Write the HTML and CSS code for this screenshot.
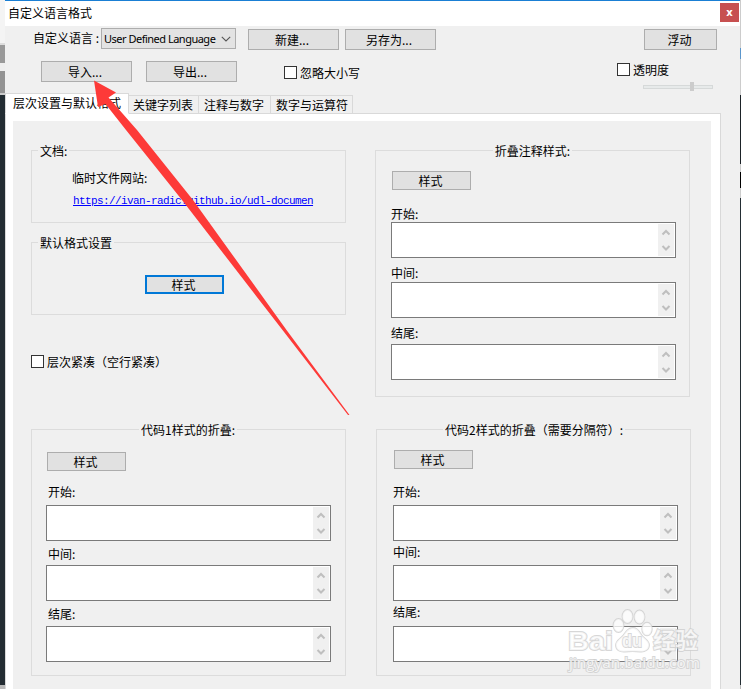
FILE: index.html
```
<!DOCTYPE html>
<html lang="zh-CN">
<head>
<meta charset="utf-8">
<title>自定义语言格式</title>
<link rel="stylesheet" href="styles.css">
</head>
<body>
<div class="desktop">
  <div class="strip-left"><i class="s1"></i><i class="s2"></i><i class="s3"></i><i class="s4"></i><i class="s5"></i></div>
  <main class="window">
    <header class="title"><span>自定义语言格式</span><button class="close">x</button></header>
    <section class="toolbar">
      <div class="row row-a">
        <label class="lang">自定义语言 :</label>
        <div class="select"><span>User Defined Language</span><svg width="10" height="6" viewBox="0 0 10 6"><path d="M.8.8 5 5 9.2.8"/></svg></div>
        <button class="btn big new">新建...</button>
        <button class="btn big save">另存为...</button>
        <button class="btn dock">浮动</button>
      </div>
      <div class="row row-b">
        <button class="btn big">导入...</button>
        <button class="btn big export">导出...</button>
        <label class="check ignore"><i></i>忽略大小写</label>
        <div class="opacity"><label class="check"><i></i>透明度</label><div class="slider"><b></b></div></div>
      </div>
    </section>
    <nav class="tabs"><span class="tab active">层次设置与默认格式</span><span class="tab t2">关键字列表</span><span class="tab t3">注释与数字</span><span class="tab t4">数字与运算符</span></nav>
    <section class="page">
      <div class="panel">
        <div class="col">
          <section class="group doc"><h2>文档:</h2><p>临时文件网站:</p><a>https://ivan-radic.github.io/udl-documen</a></section>
          <section class="group def"><h2>默认格式设置</h2><button class="btn style focus">样式</button></section>
          <label class="check compact"><i></i>层次紧凑（空行紧凑）</label>
          <section class="group fold one"><h2>代码1样式的折叠:</h2><button class="btn style">样式</button>
            <label class="l1">开始:</label><div class="area"><div class="scroll"><svg viewBox="0 0 16 32"><path d="M4.5 10.5 8 7l3.500 3.500M4.500 22 8 25.500l3.500-3.500"/></svg></div></div>
            <label class="l2">中间:</label><div class="area"><div class="scroll"><svg viewBox="0 0 16 32"><path d="M4.5 10.5 8 7l3.500 3.500M4.500 22 8 25.500l3.500-3.500"/></svg></div></div>
            <label class="l3">结尾:</label><div class="area"><div class="scroll"><svg viewBox="0 0 16 32"><path d="M4.5 10.5 8 7l3.500 3.500M4.500 22 8 25.500l3.500-3.500"/></svg></div></div>
          </section>
        </div>
        <div class="col">
          <section class="group fold comment"><h2>折叠注释样式:</h2><button class="btn style">样式</button>
            <label class="l1">开始:</label><div class="area"><div class="scroll"><svg viewBox="0 0 16 32"><path d="M4.5 10.5 8 7l3.500 3.500M4.500 22 8 25.500l3.500-3.500"/></svg></div></div>
            <label class="l2">中间:</label><div class="area"><div class="scroll"><svg viewBox="0 0 16 32"><path d="M4.5 10.5 8 7l3.500 3.500M4.500 22 8 25.500l3.500-3.500"/></svg></div></div>
            <label class="l3">结尾:</label><div class="area"><div class="scroll"><svg viewBox="0 0 16 32"><path d="M4.5 10.5 8 7l3.500 3.500M4.500 22 8 25.500l3.500-3.500"/></svg></div></div>
          </section>
          <section class="group fold two"><h2>代码2样式的折叠（需要分隔符）:</h2><button class="btn style">样式</button>
            <label class="l1">开始:</label><div class="area"><div class="scroll"><svg viewBox="0 0 16 32"><path d="M4.5 10.5 8 7l3.500 3.500M4.500 22 8 25.500l3.500-3.500"/></svg></div></div>
            <label class="l2">中间:</label><div class="area"><div class="scroll"><svg viewBox="0 0 16 32"><path d="M4.5 10.5 8 7l3.500 3.500M4.500 22 8 25.500l3.500-3.500"/></svg></div></div>
            <label class="l3">结尾:</label><div class="area"><div class="scroll"><svg viewBox="0 0 16 32"><path d="M4.5 10.5 8 7l3.500 3.500M4.500 22 8 25.500l3.500-3.500"/></svg></div></div>
          </section>
        </div>
      </div>
    </section>
  </main>
  <div class="strip-right"></div>
  <svg class="overlay" width="741" height="689" viewBox="0 0 741 689">
    <path class="arrow" d="M94 80.500 116 92.500 108.500 97.500 137 130 193 200 286.500 330 349.500 415H348L282.500 330 182 200 126 130 105.500 104 98 107Z"/>
    <g class="mark">
      <text x="568" y="650" class="bai" textLength="45" lengthAdjust="spacingAndGlyphs">Bai</text>
      <ellipse cx="618.500" cy="625.500" rx="5" ry="6.500"/><ellipse cx="627.500" cy="616.500" rx="5" ry="6.500"/><ellipse cx="639.500" cy="617" rx="5" ry="6.500"/><ellipse cx="647" cy="629" rx="4.800" ry="6.300"/>
      <path d="M633 628c-5 0-7 4-10 8-3 3-7 5-7 9 0 5 4 7 9 6.500 5-.5 10-.5 15 0 5 .5 9-2 9-6.500 0-4-4-6-7-9-3-4-4-8-9-8Z"/>
      <text x="622" y="647" class="du" textLength="20" lengthAdjust="spacingAndGlyphs">du</text>
      <text x="653" y="648" class="jy" textLength="45" lengthAdjust="spacingAndGlyphs">经验</text>
      <text x="569" y="668" class="url" textLength="131" lengthAdjust="spacingAndGlyphs">jingyan.baidu.com</text>
    </g>
  </svg>
</div>
</body>
</html>
```
FILE: styles.css
```
* { box-sizing: border-box; }
body { margin: 0; font: 12px/16px "Noto Sans CJK SC", sans-serif; color: #000; overflow: hidden; }
button { font: inherit; color: inherit; padding: 0; margin: 0; }
h2, p { margin: 0; font: inherit; }
.desktop { position: relative; display: flex; width: 741px; height: 689px; overflow: hidden; }
.strip-left { width: 5px; flex: none; display: flex; flex-direction: column; }
.strip-left i { display: block; }
.s1 { height: 43px; background: #f4f4f4; }
.s2 { height: 20px; background: #999; border-top: 2px solid #ddd; }
.s3 { height: 8px; background: #eee; }
.s4 { height: 24px; background: #939393; border-bottom: 2px solid #ccc; }
.s5 { flex: 1; background: #232d33; border-bottom: 4px solid #b9b9b9; }
.strip-right { width: 1px; flex: none; background: linear-gradient(#ccc 0 48px, #5b96cc 48px 59px, #ccc 59px 95px, #1b2227 95px 164px, #ccc 164px 172px, #000 172px 188px, #ccc 188px 198px, #232d33 198px 685px, #bbb 685px); }
.window { width: 735px; flex: none; background: #f0f0f0; border-top: 1px solid #1a7fd4; display: flex; flex-direction: column; }
.title { height: 25px; flex: none; background: #fff; display: flex; justify-content: space-between; padding: 2px 1px 0 3px; line-height: 19px; }
.close { width: 19px; height: 19px; border: 0; background: #c75050; color: #fff; font: bold 10px/16px "DejaVu Sans", sans-serif; }
.toolbar { height: 67px; flex: none; }
.row { display: flex; align-items: flex-start; }
.row-a { padding: 2px 23px 0 28px; height: 33px; }
.lang { width: 68px; line-height: 20px; white-space: pre; }
.select { width: 135px; height: 21px; border: 1px solid #adadad; background: #e3e3e3; display: flex; align-items: center; justify-content: space-between; padding: 0 4px 0 2px; font: 11px/19px "Noto Sans", sans-serif; white-space: nowrap; }
.select span { letter-spacing: -.5px; }
.select svg { fill: none; stroke: #555; stroke-width: 1.1; }
.btn { flex: none; display: flex; align-items: center; justify-content: center; height: 21px; border: 1px solid #adadad; background: #e1e1e1; line-height: 17px; white-space: nowrap; }
.row-a .btn { margin-top: 1px; }
.big { width: 91px; padding-right: 3px; }
.new { margin-left: 12px; }
.save { margin-left: 6px; }
.dock { width: 73px; margin-left: auto; padding-right: 2px; }
.row-b { padding: 2px 26px 0 36px; }
.export { margin-left: 14px; }
.check { display: flex; height: 16px; line-height: 16px; gap: 3px; align-items: center; white-space: nowrap; }
.check i { width: 13px; height: 13px; border: 1px solid #333; background: #fff; flex: none; margin-top: -1px; }
.ignore { margin: 4px 0 0 47px; }
.opacity { margin-left: auto; width: 97px; }
.opacity .check { margin-top: 1px; }
.slider { margin: 4px 0 0 26px; width: 70px; height: 9px; display: flex; align-items: center; background: linear-gradient(#e7eaea, #e7eaea) 1px 4px / 68px 2px no-repeat, linear-gradient(#d6d9d9, #d6d9d9) 0 3px / 70px 4px no-repeat; }
.slider b { width: 4px; height: 9px; margin-left: 47px; background: #ccc; }
.tabs { display: flex; align-items: flex-end; height: 21px; flex: none; margin-bottom: -1px; position: relative; }
.tab { height: 19px; border: 1px solid #d9d9d9; border-left: 0; padding-left: 5px; line-height: 18px; white-space: nowrap; }
.active { width: 124px; height: 21px; background: #fff; border-left: 1px solid #d9d9d9; border-bottom-color: #fff; padding-left: 7px; }
.t2 { width: 70px; padding-left: 4px; }
.t3 { width: 72px; }
.t4 { width: 82px; }
.page { width: 716px; height: 600px; flex: none; background: #fff; border: 1px solid #d9d9d9; padding: 7px 9px 0 7px; }
.panel { width: 698px; height: 590px; background: #f0f0f0; display: flex; gap: 29px; padding: 29px 0 0 18px; }
.col { width: 315px; display: flex; flex-direction: column; flex: none; }
.group { width: 315px; height: 73px; border: 1px solid #dcdcdc; flex: none; display: flex; flex-direction: column; }
.group h2 { align-self: flex-start; margin: -8px 0 0 6px; padding: 0 2px; background: #f0f0f0; height: 16px; white-space: nowrap; }
.doc p { margin: 11px 0 0 40px; height: 16px; }
.doc a { margin: 8px 0 0 41px; font: 11px/14px "Liberation Mono", monospace; letter-spacing: -.6px; color: #00f; text-decoration: underline; text-underline-offset: 1px; white-space: nowrap; }
.def { margin-top: 19px; }
.style { width: 79px; height: 19px; padding-right: 2px; }
.focus { border: 2px solid #0078d7; margin: 24px 0 0 113px; }
.compact { margin-top: 39px; }
.fold { height: 247px; padding-left: 15px; }
.fold h2 { align-self: center; margin-left: -15px; }
.fold .style { margin: 12px 0 0 1px; }
.fold label { height: 16px; }
.area { width: 285px; height: 36px; flex: none; border: 1px solid #7a7a7a; background: #fff; padding: 1px; display: flex; justify-content: flex-end; }
.scroll { width: 16px; height: 32px; background: #f0f0f0; }
.scroll svg { display: block; width: 16px; height: 32px; fill: none; stroke: #bfbfbf; stroke-width: 2; }
.one { margin-top: 59px; padding-left: 14px; }
.one .style { margin-top: 14px; }
.one label { padding-left: 2px; }
.one .l1 { margin: 13px 0 5px; }
.one .l2 { margin: 5px 0 3px; }
.one .l3 { margin: 5px 0 4px; }
.comment .l1 { margin: 16px 0 0; }
.comment .l2 { margin: 7px 0 1px; }
.comment .l3 { margin: 7px 0 3px; }
.two { margin: 32px 0 0 1px; padding-left: 16px; }
.two .style { margin-top: 12px; margin-left: 1px; }
.two .l1 { margin: 15px 0 5px; }
.two .l2 { margin: 3px 0 5px; }
.two .l3 { margin: 3px 0 6px; }
.overlay { position: absolute; left: 0; top: 0; pointer-events: none; }
.arrow { fill: #fd3a38; }
.mark { fill: #fff; fill-opacity: .75; stroke: #cdcdcd; stroke-width: 1.8; stroke-opacity: .8; paint-order: stroke; font-family: "Open Sans", "Liberation Sans", sans-serif; }
.bai { font: bold 26px "Liberation Sans", sans-serif; }
.du { font: bold 18px "Liberation Sans", sans-serif; }
.jy { font: bold 22px "Noto Sans CJK SC", sans-serif; }
.url { font-size: 14px; }
```
